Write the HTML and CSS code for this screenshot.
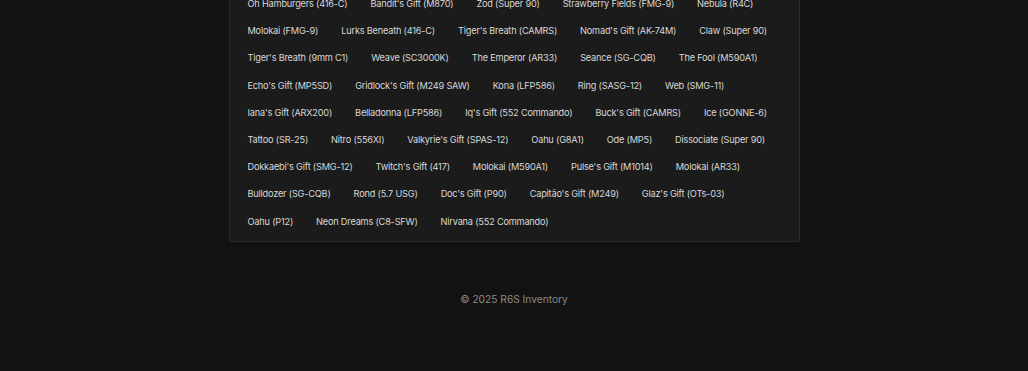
FILE: index.html
```html
<!DOCTYPE html>
<html lang="en">
<head>
<meta charset="UTF-8">
<meta name="viewport" content="width=device-width, initial-scale=1.0">
<title>R6S Inventory</title>
<link rel="stylesheet" href="styles.css">
</head>
<body>

<main class="container">
  <section class="skin-panel">
    <ul class="skin-row">
      <li>Oh Hamburgers (416-C)</li>
      <li>Bandit's Gift (M870)</li>
      <li>Zod (Super 90)</li>
      <li>Strawberry Fields (FMG-9)</li>
      <li>Nebula (R4C)</li>
    </ul>
    <ul class="skin-row">
      <li>Molokai (FMG-9)</li>
      <li>Lurks Beneath (416-C)</li>
      <li>Tiger's Breath (CAMRS)</li>
      <li>Nomad's Gift (AK-74M)</li>
      <li>Claw (Super 90)</li>
    </ul>
    <ul class="skin-row">
      <li>Tiger's Breath (9mm C1)</li>
      <li>Weave (SC3000K)</li>
      <li>The Emperor (AR33)</li>
      <li>Seance (SG-CQB)</li>
      <li>The Fool (M590A1)</li>
    </ul>
    <ul class="skin-row">
      <li>Echo's Gift (MP5SD)</li>
      <li>Gridlock's Gift (M249 SAW)</li>
      <li>Kona (LFP586)</li>
      <li>Ring (SASG-12)</li>
      <li>Web (SMG-11)</li>
    </ul>
    <ul class="skin-row">
      <li>Iana's Gift (ARX200)</li>
      <li>Belladonna (LFP586)</li>
      <li>Iq's Gift (552 Commando)</li>
      <li>Buck's Gift (CAMRS)</li>
      <li>Ice (GONNE-6)</li>
    </ul>
    <ul class="skin-row">
      <li>Tattoo (SR-25)</li>
      <li>Nitro (556XI)</li>
      <li>Valkyrie's Gift (SPAS-12)</li>
      <li>Oahu (G8A1)</li>
      <li>Ode (MP5)</li>
      <li>Dissociate (Super 90)</li>
    </ul>
    <ul class="skin-row">
      <li>Dokkaebi's Gift (SMG-12)</li>
      <li>Twitch's Gift (417)</li>
      <li>Molokai (M590A1)</li>
      <li>Pulse's Gift (M1014)</li>
      <li>Molokai (AR33)</li>
    </ul>
    <ul class="skin-row">
      <li>Bulldozer (SG-CQB)</li>
      <li>Rond (5.7 USG)</li>
      <li>Doc's Gift (P90)</li>
      <li>Capitão's Gift (M249)</li>
      <li>Glaz's Gift (OTs-03)</li>
    </ul>
    <ul class="skin-row">
      <li>Oahu (P12)</li>
      <li>Neon Dreams (C8-SFW)</li>
      <li>Nirvana (552 Commando)</li>
    </ul>
  </section>
</main>

<footer class="footer">© 2025 R6S Inventory</footer>

</body>
</html>
```

FILE: styles.css
```css
body {
  font-family: Inter, "Open Sans", sans-serif;
  margin: 0;
  padding: 0;
  background-color: #121212;
  color: #d8d8d8;
}

.container {
  width: 571px;
  margin: -17px auto 0;
}

.skin-panel {
  display: flex;
  flex-direction: column;
  gap: 10.2px;
  padding: 11px 18px;
  background-color: #1b1b1b;
  border: 1px solid #2a2a2a;
  border-radius: 3px;
}

.skin-row {
  display: flex;
  gap: 23px;
  margin: 0;
  padding: 0;
  list-style: none;
  font-size: 9.2px;
  letter-spacing: -0.2px;
  line-height: 17px;
  white-space: nowrap;
}

.footer {
  margin-top: 49px;
  text-align: center;
  font-size: 10.2px;
  line-height: 16px;
  color: #8a8a8a;
}
```
